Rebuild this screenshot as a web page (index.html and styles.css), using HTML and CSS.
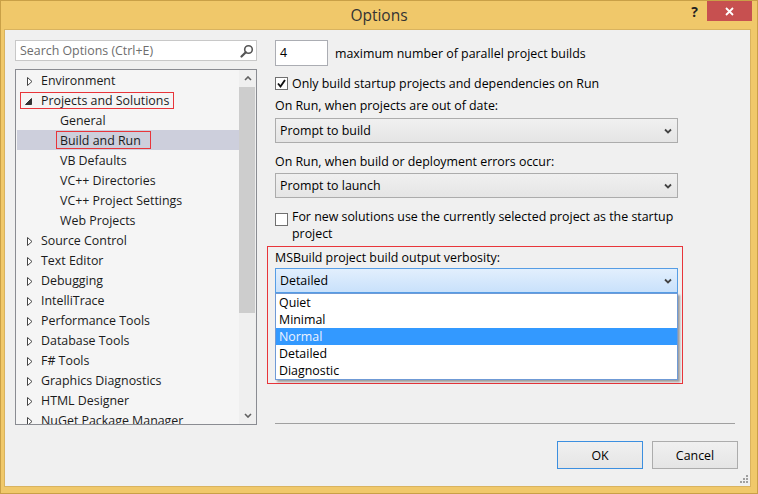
FILE: index.html
```html
<!DOCTYPE html>
<html>
<head>
<meta charset="utf-8">
<title>Options</title>
<link rel="stylesheet" href="styles.css">
</head>
<body>
<div class="window">
  <div class="titlebar">
    <div class="title">Options</div>
    <div class="controls">
      <div class="help">?</div>
      <div class="close">
        <svg width="9" height="9" viewBox="0 0 9 9"><path d="M1 1 L8 8 M8 1 L1 8" stroke="#fff" stroke-width="1.8" fill="none"/></svg>
      </div>
    </div>
  </div>
  <div class="client">
    <div class="main">
      <div class="left">
        <div class="search">
          <span class="search-text">Search Options (Ctrl+E)</span>
          <svg class="search-icon" width="14" height="14" viewBox="0 0 14 14"><circle cx="8.5" cy="5.5" r="3.8" stroke="#555" stroke-width="1.6" fill="none"/><path d="M5.8 8.2 L1.5 12.5" stroke="#555" stroke-width="2.2" stroke-linecap="round"/></svg>
        </div>
        <div class="tree">
          <div class="tree-items">
            <div class="row root"><span class="arrow"><svg width="6" height="9" viewBox="0 0 6 9"><path d="M0.5 0.5 L5 4.5 L0.5 8.5 Z" stroke="#444" stroke-width="1" fill="#fff"/></svg></span><span>Environment</span></div>
            <div class="row root"><span class="redbox rb-root"><span class="arrow"><svg class="exp" width="7" height="7" viewBox="0 0 7 7"><path d="M6.5 0.5 L6.5 6.5 L0.5 6.5 Z" fill="#333" stroke="#333" stroke-width="1"/></svg></span><span>Projects and Solutions</span></span></div>
            <div class="row child">General</div>
            <div class="row child selected"><span class="redbox rb-child">Build and Run</span></div>
            <div class="row child">VB Defaults</div>
            <div class="row child">VC++ Directories</div>
            <div class="row child">VC++ Project Settings</div>
            <div class="row child">Web Projects</div>
            <div class="row root"><span class="arrow"><svg width="6" height="9" viewBox="0 0 6 9"><path d="M0.5 0.5 L5 4.5 L0.5 8.5 Z" stroke="#444" stroke-width="1" fill="#fff"/></svg></span><span>Source Control</span></div>
            <div class="row root"><span class="arrow"><svg width="6" height="9" viewBox="0 0 6 9"><path d="M0.5 0.5 L5 4.5 L0.5 8.5 Z" stroke="#444" stroke-width="1" fill="#fff"/></svg></span><span>Text Editor</span></div>
            <div class="row root"><span class="arrow"><svg width="6" height="9" viewBox="0 0 6 9"><path d="M0.5 0.5 L5 4.5 L0.5 8.5 Z" stroke="#444" stroke-width="1" fill="#fff"/></svg></span><span>Debugging</span></div>
            <div class="row root"><span class="arrow"><svg width="6" height="9" viewBox="0 0 6 9"><path d="M0.5 0.5 L5 4.5 L0.5 8.5 Z" stroke="#444" stroke-width="1" fill="#fff"/></svg></span><span>IntelliTrace</span></div>
            <div class="row root"><span class="arrow"><svg width="6" height="9" viewBox="0 0 6 9"><path d="M0.5 0.5 L5 4.5 L0.5 8.5 Z" stroke="#444" stroke-width="1" fill="#fff"/></svg></span><span>Performance Tools</span></div>
            <div class="row root"><span class="arrow"><svg width="6" height="9" viewBox="0 0 6 9"><path d="M0.5 0.5 L5 4.5 L0.5 8.5 Z" stroke="#444" stroke-width="1" fill="#fff"/></svg></span><span>Database Tools</span></div>
            <div class="row root"><span class="arrow"><svg width="6" height="9" viewBox="0 0 6 9"><path d="M0.5 0.5 L5 4.5 L0.5 8.5 Z" stroke="#444" stroke-width="1" fill="#fff"/></svg></span><span>F# Tools</span></div>
            <div class="row root"><span class="arrow"><svg width="6" height="9" viewBox="0 0 6 9"><path d="M0.5 0.5 L5 4.5 L0.5 8.5 Z" stroke="#444" stroke-width="1" fill="#fff"/></svg></span><span>Graphics Diagnostics</span></div>
            <div class="row root"><span class="arrow"><svg width="6" height="9" viewBox="0 0 6 9"><path d="M0.5 0.5 L5 4.5 L0.5 8.5 Z" stroke="#444" stroke-width="1" fill="#fff"/></svg></span><span>HTML Designer</span></div>
            <div class="row root"><span class="arrow"><svg width="6" height="9" viewBox="0 0 6 9"><path d="M0.5 0.5 L5 4.5 L0.5 8.5 Z" stroke="#444" stroke-width="1" fill="#fff"/></svg></span><span>NuGet Package Manager</span></div>
          </div>
          <div class="vscroll">
            <div class="sb-btn"><svg width="8" height="5" viewBox="0 0 8 5"><path d="M1 4 L4 1 L7 4" stroke="#606060" stroke-width="1.6" fill="none"/></svg></div>
            <div class="sb-thumb"></div>
            <div class="sb-space"></div>
            <div class="sb-btn"><svg width="8" height="5" viewBox="0 0 8 5"><path d="M1 1 L4 4 L7 1" stroke="#606060" stroke-width="1.6" fill="none"/></svg></div>
          </div>
        </div>
      </div>
      <div class="right">
        <div class="num-row">
          <div class="num">4</div>
          <span class="num-label">maximum number of parallel project builds</span>
        </div>
        <div class="check-row first">
          <span class="cb"><svg width="11" height="11" viewBox="0 0 11 11"><path d="M2 5.5 L4.5 8.5 L9 2" stroke="#111" stroke-width="1.9" fill="none"/></svg></span>
          <span>Only build startup projects and dependencies on Run</span>
        </div>
        <div class="label l1">On Run, when projects are out of date:</div>
        <div class="combo c1"><span>Prompt to build</span><svg width="8" height="6" viewBox="0 0 8 6"><path d="M1 1.5 L4 4.5 L7 1.5" stroke="#444" stroke-width="1.8" fill="none"/></svg></div>
        <div class="label l2">On Run, when build or deployment errors occur:</div>
        <div class="combo c2"><span>Prompt to launch</span><svg width="8" height="6" viewBox="0 0 8 6"><path d="M1 1.5 L4 4.5 L7 1.5" stroke="#444" stroke-width="1.8" fill="none"/></svg></div>
        <div class="check-row second">
          <span class="cb"></span>
          <span class="wrap-text">For new solutions use the currently selected project as the startup<br>project</span>
        </div>
        <div class="verbosity">
          <div class="label">MSBuild project build output verbosity:</div>
          <div class="combo open"><span>Detailed</span><svg width="8" height="6" viewBox="0 0 8 6"><path d="M1 1.5 L4 4.5 L7 1.5" stroke="#444" stroke-width="1.8" fill="none"/></svg></div>
          <div class="listbox">
            <div class="opt">Quiet</div>
            <div class="opt">Minimal</div>
            <div class="opt hot">Normal</div>
            <div class="opt">Detailed</div>
            <div class="opt">Diagnostic</div>
          </div>
        </div>
        <div class="separator"></div>
      </div>
    </div>
    <div class="footer">
      <div class="btn default">OK</div>
      <div class="btn">Cancel</div>
    </div>
    <svg class="grip" width="8" height="8" viewBox="0 0 8 8"><g fill="#a0a0a0"><rect x="6" y="0" width="2" height="2"/><rect x="3" y="3" width="2" height="2"/><rect x="6" y="3" width="2" height="2"/><rect x="0" y="6" width="2" height="2"/><rect x="3" y="6" width="2" height="2"/><rect x="6" y="6" width="2" height="2"/></g></svg>
  </div>
</div>
</body>
</html>
```

FILE: styles.css
```css
* { box-sizing: border-box; }
html, body { margin: 0; padding: 0; }
body {
  width: 758px;
  height: 494px;
  overflow: hidden;
  font-family: "Open Sans", "Noto Sans", sans-serif;
  font-size: 12.4px;
  color: #000;
  background: #f0c86a;
}
.window {
  width: 758px;
  height: 494px;
  border: 1px solid #c9a047;
  background: #f0c86a;
  display: flex;
  flex-direction: column;
}
.titlebar {
  height: 28px;
  display: grid;
  grid-template-columns: 1fr auto 1fr;
}
.title {
  grid-column: 2;
  font-size: 15.5px;
  line-height: 28px;
  color: #333;
}
.controls {
  grid-column: 3;
  justify-self: end;
  display: flex;
  align-items: flex-start;
  margin-right: 5px;
}
.help {
  font-weight: bold;
  font-size: 14px;
  line-height: 20px;
  color: #222;
  margin-right: 9px;
  margin-top: 1px;
}
.close {
  width: 45px;
  height: 20px;
  background: #c75050;
  display: flex;
  align-items: center;
  justify-content: center;
}
.client {
  flex: 1;
  margin: 0 6px 6px 3px;
  border: 1px solid #d9b35f;
  background: #f0f0f0;
  padding: 10px 12px 0 10px;
  position: relative;
  display: flex;
  flex-direction: column;
}
.main {
  display: flex;
  gap: 18px;
  height: 385px;
  padding-right: 3px;
}
.left {
  width: 242px;
  display: flex;
  flex-direction: column;
}
.search {
  height: 21px;
  border: 1px solid #c8c8c8;
  background: #fff;
  display: flex;
  align-items: center;
  justify-content: space-between;
  padding: 0 2px 0 4px;
  color: #6d6d6d;
}
.tree {
  margin-top: 8px;
  flex: 1;
  border: 1px solid #8a8c92;
  background: #f5f5f5;
  display: flex;
  overflow: hidden;
}
.tree-items {
  flex: 1;
  overflow: hidden;
}
.row {
  height: 20px;
  display: flex;
  align-items: center;
  white-space: nowrap;
  color: #1b1b1b;
}
.row.root { padding-left: 9px; }
.row.child { padding-left: 44px; }
.row.selected {
  background: #cdcfdc;
  margin-left: 1px;
  padding-left: 43px;
}
.arrow {
  width: 16px;
  height: 20px;
  display: flex;
  align-items: center;
  padding-left: 2px;
  padding-top: 2px;
}
.arrow .exp { margin-left: -2px; }
.redbox {
  border: 1px solid #e8353a;
  display: flex;
  align-items: center;
}
.rb-root {
  height: 17px;
  margin-left: -5px;
  padding: 0 4px 0 4px;
}
.rb-root .arrow { height: 15px; }
.rb-child {
  height: 18px;
  margin-left: -4px;
  padding: 0 9px 0 3px;
}
.vscroll {
  width: 17px;
  background: #efefef;
  display: flex;
  flex-direction: column;
}
.sb-btn {
  height: 17px;
  display: flex;
  align-items: center;
  justify-content: center;
}
.sb-thumb {
  height: 226px;
  background: #cdcdcd;
  margin-right: 1px;
}
.sb-space { flex: 1; }

.right {
  flex: 1;
  display: flex;
  flex-direction: column;
}
.num-row {
  display: flex;
  align-items: center;
  height: 26px;
}
.num {
  width: 53px;
  height: 26px;
  border: 1px solid #abadb3;
  background: #fff;
  padding-left: 4px;
  line-height: 24px;
}
.num-label { margin-left: 7px; }
.check-row {
  display: flex;
  align-items: flex-start;
  line-height: 18px;
}
.check-row.first { margin-top: 9px; }
.check-row.second { margin-top: 10px; line-height: 17px; }
.cb {
  width: 13px;
  height: 13px;
  flex: none;
  border: 1px solid #707070;
  background: #fff;
  margin-top: 2px;
  margin-right: 4px;
  display: flex;
  align-items: center;
  justify-content: center;
}
.check-row.second .cb { margin-top: 5px; }
.label { line-height: 18px; }
.l1 { margin-top: 4px; }
.l2 { margin-top: 10px; }
.combo {
  width: 403px;
  height: 25px;
  border: 1px solid #acacac;
  background: linear-gradient(#f0f0f0, #e5e5e5);
  display: flex;
  align-items: center;
  justify-content: space-between;
  padding: 0 5px 0 4px;
}
.c1 { margin-top: 3px; }
.c2 { margin-top: 2px; }
.verbosity {
  margin-top: 4px;
  margin-left: -8px;
  width: 416px;
  border: 1px solid #e8353a;
  padding: 2px 3px 3px 7px;
}
.combo.open {
  margin-top: 1px;
  border-color: #569de5;
  background: linear-gradient(#e2effd, #c9e1fb);
}
.listbox {
  width: 403px;
  height: 87px;
  border: 1px solid #6f9ad6;
  background: #fff;
  box-shadow: 2px 2px 2px rgba(0, 0, 0, 0.35);
}
.opt {
  height: 17px;
  line-height: 17px;
  padding-left: 3px;
}
.opt.hot {
  background: #3399ff;
  color: #eef3ff;
}
.separator {
  margin-top: auto;
  margin-bottom: 1px;
  height: 1px;
  background: #a0a0a0;
}
.footer {
  margin-top: 16px;
  display: flex;
  justify-content: flex-end;
  gap: 9px;
}
.btn {
  width: 86px;
  height: 28px;
  border: 1px solid #acacac;
  background: linear-gradient(#f0f0f0, #e5e5e5);
  display: flex;
  align-items: center;
  justify-content: center;
}
.btn.default { border-color: #3c8fe0; }
.grip {
  position: absolute;
  right: 2px;
  bottom: 3px;
}
```
